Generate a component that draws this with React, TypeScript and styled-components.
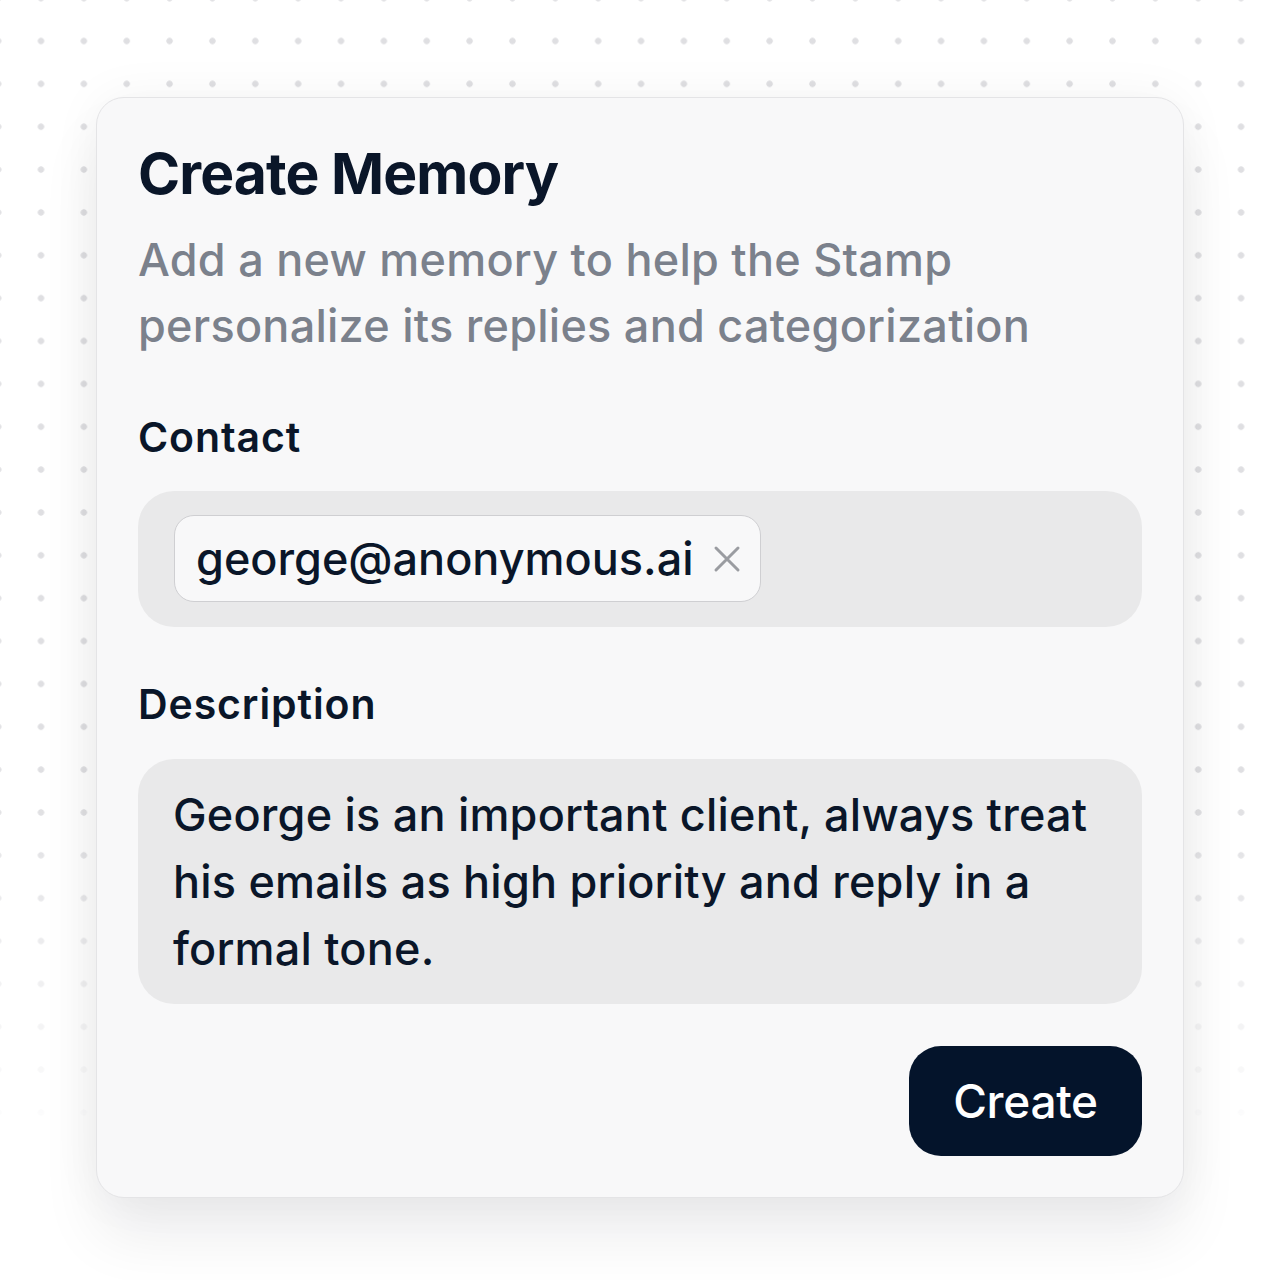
import React from "react"
import styled, { createGlobalStyle } from "styled-components"

const GlobalStyle = createGlobalStyle`
  html, body {
    margin: 0;
    padding: 0;
    background: #ffffff;
  }
  body {
    font-family: Inter, "Noto Sans", sans-serif;
    -webkit-font-smoothing: antialiased;
  }
`

const Page = styled.div`
  position: relative;
  width: 1280px;
  height: 1280px;
  box-sizing: border-box;
  padding: 97px 96px 0 96px;
  overflow: hidden;

  &::before {
    content: "";
    position: absolute;
    inset: 0;
    background-image: radial-gradient(circle, #dfdfe2 2.9px, transparent 3.5px);
    background-size: 42.86px 42.86px;
    background-position: 19.57px 19.57px;
    -webkit-mask-image: linear-gradient(to bottom, #000 62%, transparent 90%);
    mask-image: linear-gradient(to bottom, #000 62%, transparent 90%);
  }
`

const Card = styled.div`
  position: relative;
  box-sizing: border-box;
  width: 1088px;
  height: 1101px;
  padding: 42px 41px 41px 41px;
  background: #f8f8f9;
  border: 1px solid #e4e4e6;
  border-radius: 28px;
  box-shadow: 0 40px 60px rgba(20, 20, 30, 0.07), 0 0 50px rgba(20, 20, 30, 0.05);
  display: flex;
  flex-direction: column;
`

const Title = styled.h1`
  margin: 0;
  font-size: 57px;
  line-height: 68px;
  font-weight: 700;
  letter-spacing: -0.9px;
  color: #0a1629;
`

const Subtitle = styled.p`
  margin: 19px 0 0 0;
  font-size: 45px;
  line-height: 66px;
  font-weight: 500;
  color: #7b818c;
  letter-spacing: 0.25px;
`

const Label = styled.div<{ $top: number }>`
  margin-top: ${p => p.$top}px;
  font-size: 41px;
  line-height: 56px;
  font-weight: 600;
  color: #0a1629;
  letter-spacing: 0.9px;
`

const Field = styled.div<{ $top: number }>`
  margin-top: ${p => p.$top}px;
  background: #e9e9ea;
  border-radius: 36px;
`

const ContactField = styled(Field)`
  height: 136px;
  box-sizing: border-box;
  padding: 24px 36px;
  display: flex;
  align-items: flex-start;
`

const Chip = styled.div`
  height: 87px;
  box-sizing: border-box;
  display: flex;
  align-items: center;
  gap: 19px;
  padding: 0 19px 0 21px;
  background: #f8f8f9;
  border: 1.5px solid #cfcfd2;
  border-radius: 20px;
  font-size: 45px;
  font-weight: 500;
  color: #0a1629;
  letter-spacing: 0px;
`

const ChipClose = styled.span`
  display: flex;
  align-items: center;
  color: #9a9ca1;
`

const DescriptionField = styled(Field)`
  height: 245px;
  box-sizing: border-box;
  padding: 22px 35px;
  font-size: 45px;
  line-height: 67px;
  font-weight: 500;
  color: #0a1629;
  letter-spacing: 0.2px;
`

const Footer = styled.div`
  margin-top: auto;
  display: flex;
  justify-content: flex-end;
`

const CreateButton = styled.button`
  width: 233px;
  height: 110px;
  border: none;
  border-radius: 32px;
  background: #04142b;
  color: #ffffff;
  font-family: Inter, "Noto Sans", sans-serif;
  font-size: 46px;
  font-weight: 500;
  letter-spacing: -0.3px;
  cursor: pointer;
`

export default function App() {
  return (
    <>
      <GlobalStyle />
      <Page>
        <Card>
          <Title>Create Memory</Title>
          <Subtitle>
            Add a new memory to help the Stamp
            <br />
            personalize its replies and categorization
          </Subtitle>
          <Label $top={50}>Contact</Label>
          <ContactField $top={26}>
            <Chip>
              george@anonymous.ai
              <ChipClose>
                <svg width="28" height="28" viewBox="0 0 28 28" fill="none">
                  <path d="M3 3L25 25M25 3L3 25" stroke="currentColor" strokeWidth="3" strokeLinecap="round" />
                </svg>
              </ChipClose>
            </Chip>
          </ContactField>
          <Label $top={49}>Description</Label>
          <DescriptionField $top={27}>
            George is an important client, always treat his emails as high priority and reply in a formal tone.
          </DescriptionField>
          <Footer>
            <CreateButton>Create</CreateButton>
          </Footer>
        </Card>
      </Page>
    </>
  )
}
